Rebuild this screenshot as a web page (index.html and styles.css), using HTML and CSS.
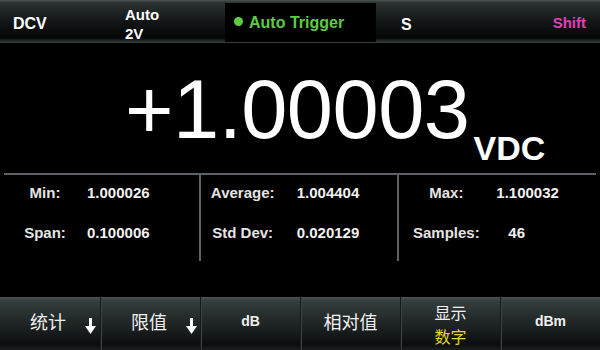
FILE: index.html
```html
<!DOCTYPE html>
<html lang="zh">
<head>
  <meta charset="UTF-8">
  <title>DMM Display</title>
  <link rel="stylesheet" href="styles.css">
</head>
<body>
  <div class="screen">
    <div class="topbar">
      <span class="tb-func">DCV</span>
      <span class="tb-range">Auto<br>2V</span>
      <div class="tb-trigger"><span class="dot"></span>Auto Trigger</div>
      <span class="tb-speed">S</span>
      <span class="tb-shift">Shift</span>
    </div>

    <div class="reading">
      <span class="reading-value">+1.00003</span>
      <span class="reading-unit">VDC</span>
    </div>

    <div class="stats">
      <div class="stat-col col1">
        <span class="lbl">Min:</span><span class="val">1.000026</span>
        <span class="lbl">Span:</span><span class="val">0.100006</span>
      </div>
      <div class="stat-col col2">
        <span class="lbl">Average:</span><span class="val">1.004404</span>
        <span class="lbl">Std Dev:</span><span class="val">0.020129</span>
      </div>
      <div class="stat-col col3">
        <span class="lbl">Max:</span><span class="val">1.100032</span>
        <span class="lbl">Samples:</span><span class="val shift">46</span>
      </div>
    </div>

    <div class="softkeys">
      <div class="key key-arrow">统计
        <svg class="arrow" width="11" height="16" viewBox="0 0 11 16"><path d="M4 0h3v8h4l-5.5 8L0 8h4z" fill="#fff"/></svg>
      </div>
      <div class="key key-arrow">限值
        <svg class="arrow" width="11" height="16" viewBox="0 0 11 16"><path d="M4 0h3v8h4l-5.5 8L0 8h4z" fill="#fff"/></svg>
      </div>
      <div class="key key-latin">dB</div>
      <div class="key">相对值</div>
      <div class="key key-two"><span>显示</span><span class="sel">数字</span></div>
      <div class="key key-latin">dBm</div>
    </div>
  </div>
</body>
</html>
```

FILE: styles.css
```css
body { margin: 0; background: #000; font-family: "Liberation Sans", Arial, sans-serif; color: #fff; }
.screen { width: 600px; height: 350px; overflow: hidden; background: #000; display: flex; flex-direction: column; }

/* status bar */
.topbar { height: 43px; display: flex; align-items: center; background: linear-gradient(#4a5252 0, #2c3333 6%, #151919 45%, #050606 88%, #3a4242 100%); font-weight: bold; font-size: 16px; box-sizing: border-box;}
.tb-func { width: 125px; padding-left: 13px; padding-top: 5px; box-sizing: border-box; }
.tb-range { width: 100px; font-size: 15px; line-height: 19px; margin-top: 4px; }
.tb-trigger { align-self: flex-end; width: 151px; height: 39px; background: #000; color: #5ccc44; display: flex; align-items: center; box-sizing: border-box; padding-left: 9px; margin-bottom: 1px; }
.tb-trigger .dot { width: 9px; height: 9px; border-radius: 50%; background: #5ccc44; margin-right: 6px; margin-top: -2px; }
.tb-speed { margin-left: 25px; margin-top: 6px; }
.tb-shift { margin-left: auto; margin-right: 14px; color: #e040b8; font-size: 15px; margin-top: 1px; }

/* main reading */
.reading { height: 130px; display: flex; align-items: flex-start; padding-left: 125px; padding-top: 25px; box-sizing: border-box; }
.reading-value { font-size: 83px; line-height: 1; letter-spacing: -0.5px; }
.reading-unit { font-size: 34px; line-height: 1; font-weight: bold; margin-top: 63px; margin-left: 4px; }

/* statistics */
.stats { display: flex; margin: 0 4px; border-top: 2px solid #5a6264; height: 86px; }
.stat-col { width: 200px; display: grid; grid-template-rows: 34px 46px; align-items: center; font-size: 15px; font-weight: bold; box-sizing: border-box; }
.stat-col + .stat-col { border-left: 2px solid #5a6264; }
.stat-col .lbl { text-align: center; color: #e4e4e4; }
.stat-col .val { color: #f2f2f2; }
.col1 { grid-template-columns: 66px auto; column-gap: 9px; padding-left: 8px; width: 196px; }
.col2 { grid-template-columns: 76px auto; column-gap: 16px; padding-left: 4px; }
.col3 { grid-template-columns: 80px auto; column-gap: 10px; padding-left: 7px; }
.col3 .shift { padding-left: 12px; }

/* soft keys */
.softkeys { margin-top: auto; height: 53px; display: flex; background: linear-gradient(#4a5454 0, #343c3c 8%, #222828 45%, #0c0e0e 90%, #1c2020 100%); }
.key { width: 100px; display: flex; align-items: center; justify-content: center; font-family: "Noto Sans CJK SC", sans-serif; font-size: 18px; color: #f0f0f0; border-left: 1px solid #141818; box-shadow: inset 1px 0 0 #3c4444; box-sizing: border-box; padding-bottom: 6px; }
.key:first-child { border-left: none; box-shadow: none; }
.key-arrow { justify-content: flex-start; padding-left: 30px; gap: 19px; }
.key-arrow .arrow { margin-top: 10px; }
.key-latin { font-family: "Liberation Sans", Arial, sans-serif; font-weight: bold; font-size: 14px; }
.key-two { flex-direction: column; font-size: 16px; line-height: 24px; padding-bottom: 0; }
.key-two .sel { color: #e8d42a; }
```
